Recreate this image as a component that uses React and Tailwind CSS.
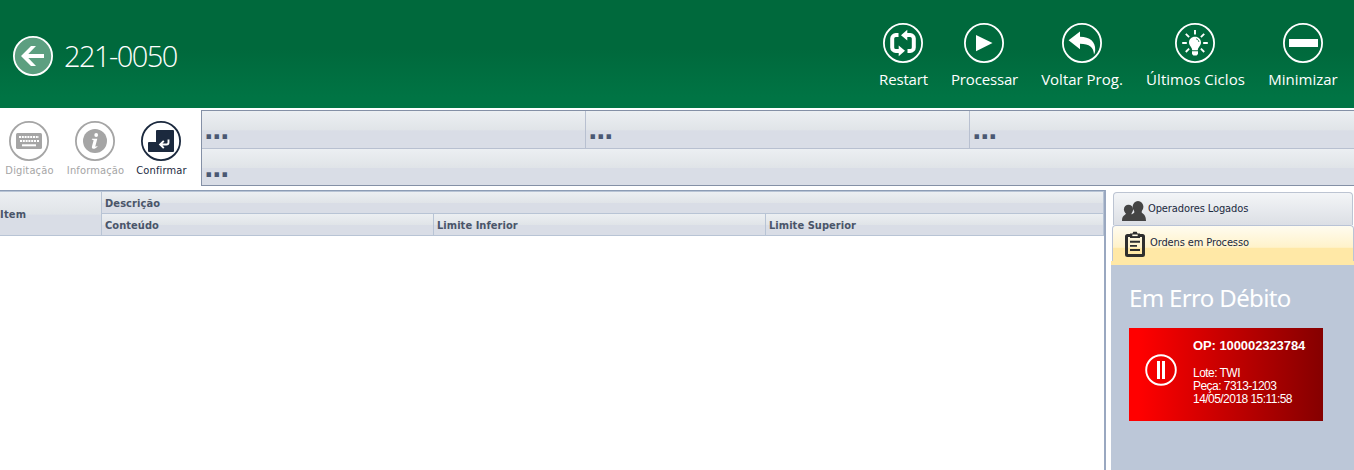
const TAHOMA = "font-['DejaVu_Sans_Condensed','DejaVu_Sans',sans-serif] [font-stretch:condensed]";
const SEGOE = "font-['Open_Sans','Noto_Sans',sans-serif]";
const BAR = 'bg-[linear-gradient(#eceff2,#e0e4e8_52%,#d9dde6_53%,#d9dde6)]';

function Ring({ children, fill = 'none' }) {
  return (
    <svg className="block size-10 shrink-0" viewBox="0 0 40 40" fill="none">
      <circle cx="20" cy="20" r="19.1" fill={fill} stroke="currentColor" strokeWidth="1.8" />
      {children}
    </svg>
  );
}

function BackIcon() {
  return (
    <Ring fill="#5c9f80">
      <path d="M8 20 18 10h5l-7.700 8H31v4H15.300l7.700 8h-5Z" fill="currentColor" />
    </Ring>
  );
}

function RestartIcon() {
  return (
    <Ring>
      <path d="M15.500 12h-2.700a3.600 3.600 0 0 0-3.600 3.600v8.800a3.600 3.600 0 0 0 3.600 3.600h4.200M24.500 28h2.700a3.600 3.600 0 0 0 3.600-3.600v-8.800a3.600 3.600 0 0 0-3.600-3.600H23" stroke="currentColor" strokeWidth="4" />
      <path d="M24.300 6.800v10.800L18 12.200ZM15.700 22.400v10.800L22 27.800Z" fill="currentColor" />
    </Ring>
  );
}

function PlayIcon() {
  return (
    <Ring>
      <path d="M12 12v16.300L28.500 20Z" fill="currentColor" />
    </Ring>
  );
}

function ReplyIcon() {
  return (
    <Ring>
      <path d="M6.600 17.200 18 8.600v5.200c10 0 15.600 5 15.200 13.200-.1 2-.5 3.400-1.200 4.500C31.600 24.400 27.600 20.800 18 20.800v5.400Z" fill="currentColor" />
    </Ring>
  );
}

function BulbIcon() {
  return (
    <Ring>
      <path d="M20 13.800c-3.600 0-6 2.600-6 5.700 0 3.300 2.900 4.300 3.200 7.700h5.600c.3-3.400 3.200-4.400 3.200-7.700 0-3.100-2.400-5.700-6-5.700ZM17 28.300h6v2.600l-1.400 1.700h-3.200L17 30.900Z" fill="currentColor" />
      <path d="M20 7v4.400M7.200 20h4.600M28.200 20h4.600M10.800 10.800l3.300 3.300M29.200 10.800l-3.300 3.300M10.800 29l3.300-3.300M29.200 29l-3.300-3.300" stroke="currentColor" strokeWidth="1.900" />
      <path d="M21 15.800c1.700.4 2.700 1.600 2.900 3.200" stroke="#00693c" strokeWidth=".8" />
    </Ring>
  );
}

function MinusIcon() {
  return (
    <Ring>
      <path d="M6 16h29v8H6z" fill="currentColor" />
    </Ring>
  );
}

function KeyboardIcon() {
  return (
    <Ring>
      <rect x="7" y="12" width="26" height="16" rx="1.500" fill="currentColor" />
      <path d="M10 16h20M11 20h16M28 20h2" stroke="#fff" strokeWidth="2" strokeDasharray="2 .8" />
      <path d="M13 24.300h14" stroke="#fff" strokeWidth="2" />
    </Ring>
  );
}

function InfoIcon() {
  return (
    <Ring>
      <circle cx="20" cy="20" r="12" fill="currentColor" />
      <circle cx="21.200" cy="14" r="1.900" fill="#fff" />
      <path d="M17 17.700h5.300l-1.900 7.200c-.2.900.4 1 1.700.1l.5.500c-1.600 1.700-3 2.400-4.300 2.300-1.300-.1-1.700-1-1.300-2.500l1.500-5.600c.2-.8-.2-1-1.700-1Z" fill="#fff" />
    </Ring>
  );
}

function EnterIcon() {
  return (
    <Ring>
      <path d="M16 9h16a1 1 0 0 1 1 1v20a1 1 0 0 1-1 1H8a1 1 0 0 1-1-1v-8a1 1 0 0 1 1-1h7V10a1 1 0 0 1 1-1Z" fill="currentColor" />
      <path d="M27.500 18.500v3a2 2 0 0 1-2 2H20M22.800 19.800l-3.700 3.700 3.700 3.700" stroke="#fff" strokeWidth="1.900" />
    </Ring>
  );
}

function UsersIcon() {
  return (
    <svg className="block h-5 w-6" viewBox="0 0 24 20" fill="#444">
      <ellipse cx="6.500" cy="8.500" rx="4.600" ry="4.800" />
      <path d="M0 20c0-3.500.8-5 3.300-6.500L5 11h4l3 9Z" />
      <path d="M7.500 20c.2-4.800 1.300-6.200 4.700-8.200l.3-3.300h7l.3 3.300c3 2 4.100 3.800 4.200 8.200Z" />
      <ellipse cx="16" cy="5.800" rx="5.400" ry="5.800" />
    </svg>
  );
}

function ClipboardIcon() {
  return (
    <svg className="block h-[26px] w-5" viewBox="0 0 20 26" fill="none" stroke="#2e2e2e">
      <rect x="1.500" y="4.500" width="17" height="20" rx="1" strokeWidth="3" />
      <path d="M5 7V2.500h2.500L8.300.8h3.400l.8 1.700H15V7Z" fill="#2e2e2e" stroke="none" />
      <path d="M7.300 4.300h5.400" stroke="#fffbe8" strokeWidth="1.600" />
      <path d="M5 10.800h10M5 14.900h7M5 19h10" strokeWidth="1.900" />
    </svg>
  );
}

const headerActions = [
  { label: 'Restart', Icon: RestartIcon, width: 'w-12 mr-px', spacing: 'pl-px tracking-[-0.150px]' },
  { label: 'Processar', Icon: PlayIcon, width: 'w-[66px] mr-px', spacing: 'pl-px tracking-[-0.150px]' },
  { label: 'Voltar Prog.', Icon: ReplyIcon, width: 'w-[82px]', spacing: 'tracking-[0px]' },
  { label: 'Últimos Ciclos', Icon: BulbIcon, width: 'w-[98px] mr-px', spacing: 'pl-px tracking-[0.050px]' },
  { label: 'Minimizar', Icon: MinusIcon, width: 'w-[70px]', spacing: 'tracking-[0px]' },
];

const tools = [
  { label: 'Digitação', Icon: KeyboardIcon, color: 'text-[#a5a5a5]' },
  { label: 'Informação', Icon: InfoIcon, color: 'text-[#a5a5a5]' },
  { label: 'Confirmar', Icon: EnterIcon, color: 'text-[#1b293e]' },
];

function Header() {
  return (
    <header className={`${SEGOE} flex h-[108px] shrink-0 justify-between bg-[linear-gradient(#00693c,#00693c_45%,#007444_90%,#007444)] pr-4 pl-[13px] text-white`}>
      <div className="flex h-[112px] items-center gap-[11px]">
        <BackIcon />
        <h1 className="text-[29px] leading-10 font-light tracking-[-1.550px]">221-0050</h1>
      </div>
      <nav className="flex gap-[23px] pt-[23px]">
        {headerActions.map(({ label, Icon, width, spacing }) => (
          <button key={label} className={`${width} flex flex-col items-center`}>
            <Icon />
            <span className={`${spacing} mt-[6px] text-[15px] leading-5 whitespace-nowrap`}>{label}</span>
          </button>
        ))}
      </nav>
    </header>
  );
}

function InfoCell({ className }) {
  return (
    <div className={`${BAR} ${className} overflow-hidden pl-[2px] font-['DejaVu_Sans',sans-serif] text-[25px] leading-[39px] font-bold tracking-[-1.500px] text-[#4a5873]`}>...</div>
  );
}

function Toolbar() {
  return (
    <section className="flex h-[82px] shrink-0">
      <div className="-ml-[6px] flex w-[207px] shrink-0 pt-[13px]">
        {tools.map(({ label, Icon, color }) => (
          <button key={label} className={`${color} -mr-1 flex w-[70px] flex-col items-center`}>
            <Icon />
            <span className={`${TAHOMA} mt-[3px] pl-px text-[11px] leading-[14px] tracking-[0.150px] whitespace-nowrap`}>{label}</span>
          </button>
        ))}
      </div>
      <div className="mt-[2px] flex h-[76px] grow flex-col overflow-hidden border-y border-l border-[#8490a6]">
        <div className="flex h-[38px] border-b border-[#b8c0d0]">
          <InfoCell className="w-[384px] border-r border-[#b8c0d0]" />
          <InfoCell className="w-[384px] border-r border-[#b8c0d0]" />
          <InfoCell className="grow" />
        </div>
        <InfoCell className="h-9" />
      </div>
    </section>
  );
}

function DataTable() {
  return (
    <section className={`${TAHOMA} flex w-[1106px] shrink-0 flex-col border-t border-r-2 border-t-[#8c9cb5] border-r-[#9aa8c0] text-[11px] font-bold text-[#4a5569]`}>
      <div className="flex h-[45px] border-t border-r border-b border-[#b8c4d5]">
        <div className={`${BAR} flex w-[102px] items-center border-r border-[#b8c4d5] pt-[3px] tracking-[0.200px]`}>Item</div>
        <div className="flex grow flex-col">
          <div className={`${BAR} flex h-[22px] items-center border-b border-[#b8c4d5] pt-[3px] pl-[3px] tracking-[0.100px]`}>Descrição</div>
          <div className="flex h-[21px] tracking-[0.050px]">
            <div className={`${BAR} flex w-[332px] items-center border-r border-[#b8c4d5] pt-1 pl-[3px]`}>Conteúdo</div>
            <div className={`${BAR} flex w-[332px] items-center border-r border-[#b8c4d5] pt-1 pl-[3px]`}>Limite Inferior</div>
            <div className={`${BAR} flex grow items-center pt-1 pl-[3px]`}>Limite Superior</div>
          </div>
        </div>
      </div>
    </section>
  );
}

function OrderCard() {
  return (
    <article className="flex h-[93px] w-[194px] bg-[linear-gradient(90deg,#ff0000,#ff0000_5%,#850000)] font-['Liberation_Sans',sans-serif] text-white">
      <svg className="mt-[26px] ml-4 block size-8 shrink-0" viewBox="0 0 32 32" fill="none" stroke="white">
        <circle cx="16" cy="16" r="14.800" strokeWidth="1.900" />
        <path d="M13.500 7v18M18.500 7v18" strokeWidth="3" />
      </svg>
      <div className="pt-[10px] pl-4 whitespace-nowrap">
        <p className="text-[13px] leading-4 font-bold tracking-[-0.080px]">OP: 100002323784</p>
        <div className="mt-[13px] text-[12px] leading-[13px] tracking-[-0.540px]">
          <p>Lote: TWI</p>
          <p>Peça: 7313-1203</p>
          <p>14/05/2018 15:11:58</p>
        </div>
      </div>
    </article>
  );
}

function SidePanel() {
  return (
    <aside className="ml-[4px] flex grow flex-col pt-[2px]">
      <div className={`${TAHOMA} mr-px ml-[3px] flex h-[33px] items-center rounded-t border border-b-0 border-[#bcc4d2] bg-[linear-gradient(#f3f5f7,#dcdfe5)] pl-2 text-[11px] tracking-[-0.100px] text-[#1b293e]`}>
        <span className="mt-[3px]"><UsersIcon /></span>
        <span className="ml-[2px]">Operadores Logados</span>
      </div>
      <div className={`${TAHOMA} ml-[2px] flex h-[36px] items-center rounded-t border border-b-0 border-[#b9c3d6] bg-[linear-gradient(#fffcf0,#fff2ca_61%,#ffe8a6_63%,#ffe8a6)] pl-3 text-[11px] tracking-[-0.120px] text-[#1b293e]`}>
        <span><ClipboardIcon /></span>
        <span className="ml-[5px]">Ordens em Processo</span>
      </div>
      <div className="ml-px h-1 bg-[#ffe8a6]" />
      <div className="ml-px grow bg-[#bcc7d8] pt-[18px] pl-[18px]">
        <h2 className="font-['Noto_Sans',sans-serif] text-[24px] leading-[30px] tracking-[-0.650px] whitespace-nowrap text-white">Em Erro Débito</h2>
        <div className="mt-[15px]"><OrderCard /></div>
      </div>
    </aside>
  );
}

export default function App() {
  return (
    <div className="flex h-[470px] w-[1354px] flex-col overflow-hidden bg-white">
      <Header />
      <Toolbar />
      <main className="flex grow">
        <DataTable />
        <SidePanel />
      </main>
    </div>
  );
}
